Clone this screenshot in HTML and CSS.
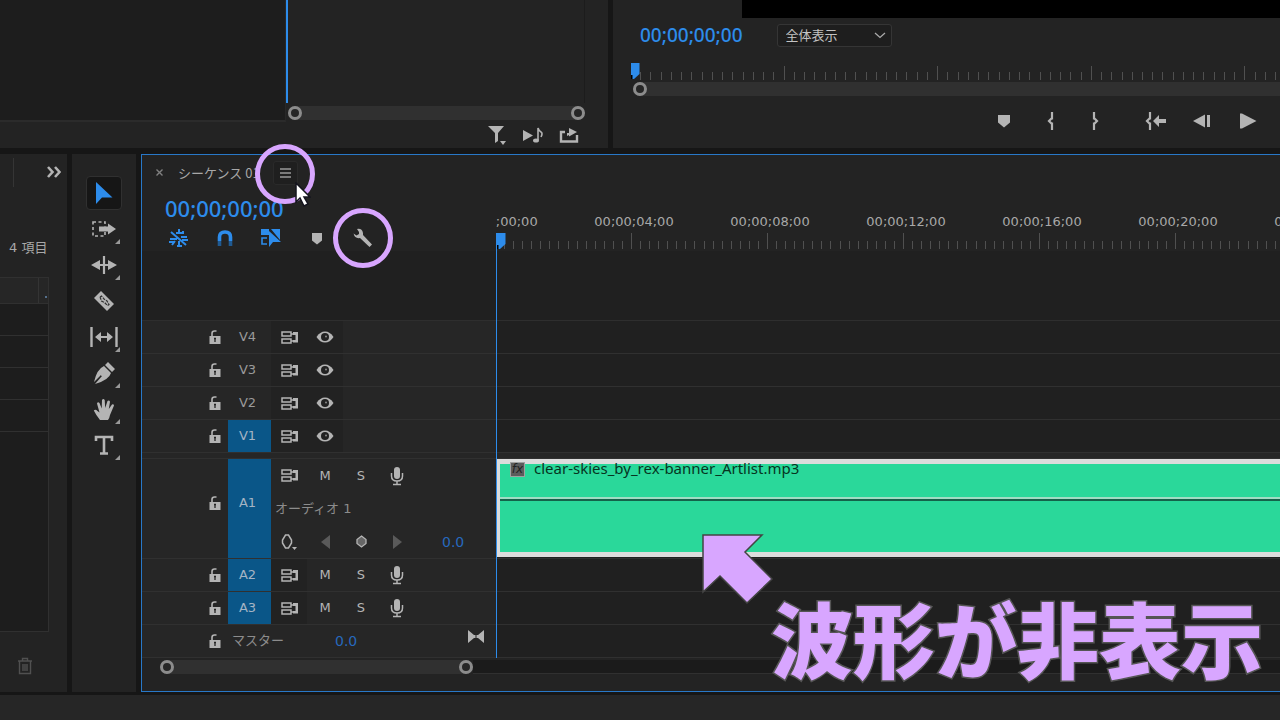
FILE: index.html
```html
<!DOCTYPE html>
<html lang="ja">
<head>
<meta charset="utf-8">
<title>シーケンス 01</title>
<link rel="stylesheet" href="styles.css">
</head>
<body>
<svg class="defs" aria-hidden="true">
  <symbol id="lock" viewBox="0 0 12 14"><path d="M3 6V3.500Q3 1 5.500 1H7.500" fill="none" stroke="currentColor" stroke-width="1.600"/><path d="M.5 6h11v8H.5z" fill="currentColor"/><path d="M6 8v4M5 8.500h2" stroke="#252525" stroke-width="1.300"/></symbol>
  <symbol id="sync" viewBox="0 0 17 13"><path d="M1 1h9v4H1zM1 8h9v4H1z" fill="none" stroke="currentColor" stroke-width="1.500"/><path d="M10 3h2M10 10h2" stroke="currentColor" stroke-width="1.500"/><path d="M12 1h5v10.500h-5V9h2.500V4H12z" fill="currentColor"/></symbol>
  <symbol id="eye" viewBox="0 0 18 12"><path d="M.5 6Q4 .5 9 .5T17.500 6Q14 11.500 9 11.500T.5 6z" fill="currentColor"/><circle cx="9" cy="6" r="4" fill="#222"/><circle cx="10" cy="5.500" r="1" fill="#888"/></symbol>
  <symbol id="mic" viewBox="0 0 14 20"><rect x="4" y="1" width="6" height="12" rx="3" fill="currentColor"/><path d="M1.500 7v3q0 5 5.500 5t5.500-5V7M7 15v3M3 18.500h8" fill="none" stroke="currentColor" stroke-width="1.500"/></symbol>
  <symbol id="marker" viewBox="0 0 14 14"><path d="M1 1h12v7.500l-6 5-6-5z" fill="currentColor"/></symbol>
  <symbol id="head" viewBox="0 0 9 16"><path d="M0 0h8.500v11L3 16H0z" fill="#2d8ceb"/><path d="M0 12h1.500v4H0z" fill="#000"/></symbol>
  <symbol id="cursor" viewBox="0 0 18 24"><path d="M1 1v22l6-6.500h10.500z" fill="#2d8ceb"/></symbol>
</svg>

<main class="app">
  <div class="upper">
    <section class="panel source">
      <div class="source-view">
        <div class="controls-list"></div>
        <div class="keyframes">
          <div class="keyframe-area"></div>
          <div class="zoombar"><i class="knob"></i><i class="knob"></i></div>
        </div>
      </div>
      <div class="source-tools">
        <button aria-label="フィルター"><svg width="20" height="20" viewBox="0 0 20 20"><path d="M1 1h16l-6 7v8l-3 2V8zM13 16h6l-3 4z" fill="currentColor"/></svg></button>
        <button aria-label="オーディオ再生"><svg width="22" height="18" viewBox="0 0 22 18"><path d="M1 4l10 5.500L1 15z" fill="currentColor"/><ellipse cx="14" cy="14.500" rx="3" ry="2" fill="currentColor"/><path d="M16 14V2q1 3 3 4t0 5" fill="none" stroke="currentColor" stroke-width="1.600"/></svg></button>
        <button aria-label="書き出し"><svg width="20" height="16" viewBox="0 0 20 16"><path d="M6 5H2v9.500h16V8" fill="none" stroke="currentColor" stroke-width="2.400"/><path d="M8 9V6h2V1l8 4-8 4.500V8z" fill="currentColor"/></svg></button>
      </div>
    </section>

    <section class="panel program">
      <div class="picture"></div>
      <div class="program-bar">
        <span class="timecode small">00;00;00;00</span>
        <label class="fit"><select aria-label="ズームレベル"><option>全体表示</option></select><svg width="12" height="7" viewBox="0 0 12 7"><path d="M1 1l5 4.500L11 1" fill="none" stroke="#aaa" stroke-width="1.300"/></svg></label>
      </div>
      <div class="program-ruler">
        <svg class="ticks" data-first="0" data-major="153.600" data-count="15" data-height="14" width="100%" height="14"></svg>
        <svg class="ruler-head" width="9" height="16"><use href="#head"/></svg>
      </div>
      <div class="zoombar wide"><i class="knob"></i></div>
      <div class="transport">
        <button aria-label="マーカーを追加"><svg width="14" height="14"><use href="#marker"/></svg></button>
        <button aria-label="インをマーク"><svg width="10" height="18" viewBox="0 0 10 18"><path d="M7 0v7.500M7 10.500V18M7 6L4 9l3 3" fill="none" stroke="currentColor" stroke-width="2.200"/></svg></button>
        <button aria-label="アウトをマーク"><svg width="10" height="18" viewBox="0 0 10 18"><path d="M3 0v7.500M3 10.500V18M3 6l3 3-3 3" fill="none" stroke="currentColor" stroke-width="2.200"/></svg></button>
        <button class="apart" aria-label="インへ移動"><svg width="22" height="18" viewBox="0 0 22 18"><path d="M5 0v7.500M5 10.500V18M5 6L2 9l3 3" fill="none" stroke="currentColor" stroke-width="2.200"/><path d="M8 9l6-6v4h7v4h-7v4z" fill="currentColor"/></svg></button>
        <button aria-label="前のフレーム"><svg width="18" height="14" viewBox="0 0 18 14"><path d="M0 7L12 .5v13zM14 1h3v12h-3z" fill="currentColor"/></svg></button>
        <button aria-label="再生"><svg width="18" height="16" viewBox="0 0 18 16"><path d="M1 .5h2L17.500 8 3 15.500H1z" fill="currentColor"/></svg></button>
      </div>
    </section>
  </div>

  <div class="lower">
    <aside class="panel project">
      <div class="project-tabs"><i></i><button aria-label="その他のパネル"><svg width="14" height="12" viewBox="0 0 14 12"><path d="M1 1l4.500 5L1 11M8 1l4.500 5L8 11" fill="none" stroke="currentColor" stroke-width="2.600"/></svg></button></div>
      <p class="count">4 項目</p>
      <div class="bin">
        <div class="bin-head"><i></i><b></b></div>
        <div class="bin-row"></div><div class="bin-row"></div><div class="bin-row"></div><div class="bin-row"></div>
      </div>
      <div class="project-foot"><button class="trash" aria-label="削除"><svg width="16" height="18" viewBox="0 0 16 18"><path d="M1 4h14M5.500 4V1.500h5V4M2.500 4v12.500h11V4M6 7v7M8 7v7M10 7v7" fill="none" stroke="currentColor" stroke-width="1.400"/></svg></button></div>
    </aside>

    <nav class="panel tools">
      <button class="tool on" aria-label="選択ツール"><svg width="18" height="24"><use href="#cursor"/></svg></button>
      <button class="tool more" aria-label="トラックの前方選択"><svg width="26" height="18" viewBox="0 0 26 18"><path d="M2 2h12v14H2z" fill="none" stroke="currentColor" stroke-width="1.600" stroke-dasharray="3 2.500"/><path d="M8 6.500h9V3.500l8 5.500-8 5.500v-3H8z" fill="currentColor"/></svg></button>
      <button class="tool more" aria-label="リップルツール"><svg width="26" height="20" viewBox="0 0 26 20"><path d="M0 10l9-5v10zM26 10l-9-5v10z" fill="currentColor"/><path d="M13 1v18M8 10h10" stroke="currentColor" stroke-width="2.200"/></svg></button>
      <button class="tool" aria-label="レーザーツール"><svg width="24" height="24" viewBox="0 0 24 24"><path d="M9 2l13 13-7 7L2 9z" fill="currentColor"/><path d="M8 8l1.500-1 2.500 3 3 2 2 3.500-1.500 1-3-3-3-1.500z" fill="none" stroke="#333" stroke-width="1.200" stroke-dasharray="3 1"/></svg></button>
      <button class="tool more" aria-label="スリップツール"><svg width="28" height="20" viewBox="0 0 28 20"><path d="M1.500 0v20M26.500 0v20" stroke="currentColor" stroke-width="2.400"/><path d="M5 10l6-5v4h6V5l6 5-6 5v-4h-6v4z" fill="currentColor"/></svg></button>
      <button class="tool more" aria-label="ペンツール"><svg width="24" height="24" viewBox="0 0 24 24"><path d="M16 1l7 7-3 3-7-7zM12 5l7 7q-2 7-16 11l7-8-1-1-7 7Q5 8 12 5z" fill="currentColor"/><circle cx="10.500" cy="13.500" r="1.600" fill="currentColor"/></svg></button>
      <button class="tool more" aria-label="手のひらツール"><svg width="22" height="23" viewBox="0 0 22 23"><path d="M7 22Q3 17 .8 12.500q1.600-1.800 3.700.5l2 1.500L4 5.500q.8-2 2.500-.5l2.200 5.500L9 2q1.300-2 2.700 0l.5 8L14.500 3q1.700-1.300 2.500.7L15.800 11l3.200-4.500q1.700-.8 2 1L17 17q-.5 3-2 5z" fill="currentColor"/></svg></button>
      <button class="tool more" aria-label="横書き文字ツール"><svg width="20" height="20" viewBox="0 0 20 20"><path d="M2 6V2h16v4M10 2v16M6 18.500h8" fill="none" stroke="currentColor" stroke-width="2.600"/></svg></button>
    </nav>

    <section class="panel timeline">
      <div class="timeline-top">
        <div class="timeline-head">
          <div class="tab"><button class="close" aria-label="閉じる"><svg width="7" height="7" viewBox="0 0 7 7"><path d="M.5.5l6 6M6.500.5l-6 6" stroke="currentColor" stroke-width="1.400"/></svg></button><span>シーケンス 01</span><button class="menu" aria-label="パネルメニュー"><svg width="11" height="10" viewBox="0 0 11 10"><path d="M0 1h11M0 5h11M0 9h11" stroke="currentColor" stroke-width="1.500"/></svg></button></div>
          <div class="clock"><span class="timecode">00;00;00;00</span></div>
          <div class="options">
            <button class="lit" aria-label="ネスト"><svg width="20" height="18" viewBox="0 0 20 18"><path d="M10 0v5M7 4h7V2M1 10h7M0 13h6M2 3l15 13M12 8h6M13 11h6M8 17h5M10 12v6M6 12l-3 4" fill="none" stroke="currentColor" stroke-width="2"/></svg></button>
            <button class="lit" aria-label="スナップ"><svg width="16" height="16" viewBox="0 0 16 16"><path d="M2.500 11V7q0-5 5.500-5t5.500 5v4" fill="none" stroke="currentColor" stroke-width="3.600"/><path d="M2.500 11v5M13.500 11v5" stroke="#205a92" stroke-width="3.600"/></svg></button>
            <button class="lit" aria-label="リンクされた選択"><svg width="20" height="18" viewBox="0 0 20 18"><path d="M0 0h8v6H0zM10 0h9v11z" fill="currentColor"/><path d="M6 9H1v6h5" fill="none" stroke="currentColor" stroke-width="1.600"/><path d="M8 2v16l4-5h8z" fill="currentColor"/></svg></button>
            <button aria-label="マーカー"><svg width="12" height="13" viewBox="0 0 12 13"><path d="M1 1h10v7.500L6 12.500 1 8.500z" fill="currentColor"/></svg></button>
            <button aria-label="タイムライン表示設定"><svg width="20" height="20" viewBox="0 0 20 20"><path d="M4 1q5-1 6 4v2l9 9.500-2.500 2.500L7 10Q2 11 .5 5.500l3 2L6 6V4z" fill="currentColor"/></svg></button>
          </div>
        </div>
        <div class="ruler">
          <div class="labels"><span>00;00;00;00</span><span>00;00;04;00</span><span>00;00;08;00</span><span>00;00;12;00</span><span>00;00;16;00</span><span>00;00;20;00</span><span>00;00;24;00</span></div>
          <svg class="ticks" data-first="-1" data-major="136" data-count="15" data-height="16" width="100%" height="16"></svg>
        </div>
      </div>

      <div class="track">
        <div class="head"><button class="lock" aria-label="ロック"><svg width="12" height="14"><use href="#lock"/></svg></button><button class="name">V4</button><div class="cells shade"><button aria-label="同期"><svg width="17" height="13"><use href="#sync"/></svg></button><button aria-label="表示"><svg width="18" height="12"><use href="#eye"/></svg></button></div></div>
        <div class="lane"></div>
      </div>
      <div class="track">
        <div class="head"><button class="lock" aria-label="ロック"><svg width="12" height="14"><use href="#lock"/></svg></button><button class="name">V3</button><div class="cells shade"><button aria-label="同期"><svg width="17" height="13"><use href="#sync"/></svg></button><button aria-label="表示"><svg width="18" height="12"><use href="#eye"/></svg></button></div></div>
        <div class="lane"></div>
      </div>
      <div class="track">
        <div class="head"><button class="lock" aria-label="ロック"><svg width="12" height="14"><use href="#lock"/></svg></button><button class="name">V2</button><div class="cells shade"><button aria-label="同期"><svg width="17" height="13"><use href="#sync"/></svg></button><button aria-label="表示"><svg width="18" height="12"><use href="#eye"/></svg></button></div></div>
        <div class="lane"></div>
      </div>
      <div class="track">
        <div class="head"><button class="lock" aria-label="ロック"><svg width="12" height="14"><use href="#lock"/></svg></button><button class="name target">V1</button><div class="cells shade"><button aria-label="同期"><svg width="17" height="13"><use href="#sync"/></svg></button><button aria-label="表示"><svg width="18" height="12"><use href="#eye"/></svg></button></div></div>
        <div class="lane"></div>
      </div>
      <div class="divider"></div>
      <div class="track tall">
        <div class="head"><button class="lock" aria-label="ロック"><svg width="12" height="14"><use href="#lock"/></svg></button><button class="name target">A1</button>
          <div class="stack">
            <div class="cells"><button aria-label="同期"><svg width="17" height="13"><use href="#sync"/></svg></button><button>M</button><button>S</button><button aria-label="録音"><svg width="14" height="20"><use href="#mic"/></svg></button></div>
            <div class="title">オーディオ 1</div>
            <div class="cells">
              <button aria-label="キーフレーム表示"><svg width="16" height="16" viewBox="0 0 16 16"><path d="M4.500 1h3L10.500 6v3l-3 5h-3l-3-5V6z" fill="none" stroke="currentColor" stroke-width="1.500"/><path d="M11 13h5l-2.500 3z" fill="currentColor"/></svg></button>
              <button class="dim" aria-label="前のキーフレーム"><svg width="9" height="14" viewBox="0 0 9 14"><path d="M9 0v14L0 7z" fill="currentColor"/></svg></button>
              <button aria-label="キーフレームを追加"><svg width="11" height="13" viewBox="0 0 11 13"><path d="M5.500 1L10 4.500v4l-4.500 3.500L1 8.500v-4z" fill="#666" stroke="currentColor" stroke-width="1.300"/></svg></button>
              <button class="dim" aria-label="次のキーフレーム"><svg width="9" height="14" viewBox="0 0 9 14"><path d="M0 0v14l9-7z" fill="currentColor"/></svg></button>
              <span class="level end">0.0</span>
            </div>
          </div>
        </div>
        <div class="lane">
          <div class="clip"><span class="fx">fx</span><span>clear-skies_by_rex-banner_Artlist.mp3</span></div>
        </div>
      </div>
      <div class="track">
        <div class="head"><button class="lock" aria-label="ロック"><svg width="12" height="14"><use href="#lock"/></svg></button><button class="name target">A2</button><div class="cells"><button class="shade" aria-label="同期"><svg width="17" height="13"><use href="#sync"/></svg></button><button>M</button><button>S</button><button aria-label="録音"><svg width="14" height="20"><use href="#mic"/></svg></button></div></div>
        <div class="lane"></div>
      </div>
      <div class="track">
        <div class="head"><button class="lock" aria-label="ロック"><svg width="12" height="14"><use href="#lock"/></svg></button><button class="name target">A3</button><div class="cells"><button class="shade" aria-label="同期"><svg width="17" height="13"><use href="#sync"/></svg></button><button>M</button><button>S</button><button aria-label="録音"><svg width="14" height="20"><use href="#mic"/></svg></button></div></div>
        <div class="lane"></div>
      </div>
      <div class="track">
        <div class="head"><button class="lock" aria-label="ロック"><svg width="12" height="14"><use href="#lock"/></svg></button><span class="master">マスター</span><span class="level">0.0</span><button class="fold" aria-label="折りたたみ"><svg width="16" height="13" viewBox="0 0 16 13"><path d="M0 0l6 5h4l6-5v13l-6-5H6l-6 5z" fill="currentColor"/><path d="M8 4v5" stroke="#252525"/></svg></button></div>
        <div class="lane"></div>
      </div>
      <div class="scroll"><div class="zoombar"><i class="knob"></i><i class="knob"></i></div><div class="groove"></div></div>
      <div class="playhead"><svg width="9" height="16"><use href="#head"/></svg></div>
    </section>
  </div>
  <footer class="status"></footer>

  <div class="ring first"></div>
  <div class="ring second"></div>
  <svg class="mouse" width="16" height="27" viewBox="0 0 16 27"><path d="M1 1v19l4-4 4 8 4-2-4-7h6z" fill="#fff" stroke="#14141e" stroke-width="1.500"/></svg>
  <svg class="arrow" width="74" height="74" viewBox="0 0 74 74"><path d="M1 1h59L43 18l27 27-25 24-27-27L1 58z" fill="#d8a6ff" stroke="#444" stroke-width="1.500"/></svg>
  <p class="caption">波形が非表示</p>
</main>
<script src="ticks.js"></script>
</body>
</html>
```

FILE: ticks.js
```js
// Fills each ruler with evenly spaced marks; every nth one is tall.
document.querySelectorAll('.ticks').forEach(function (svg) {
  var first = Number(svg.dataset.first);
  var major = Number(svg.dataset.major);
  var count = Number(svg.dataset.count);
  var height = Number(svg.dataset.height);
  var width = svg.getBoundingClientRect().width;
  var d = '';
  for (var i = 1; first + i * major / count < width; i++) {
    var x = Math.round(first + i * major / count) + 0.5;
    d += 'M' + x + ' ' + (i % count ? height - 8 : 0) + 'V' + height;
  }
  var path = document.createElementNS('http://www.w3.org/2000/svg', 'path');
  path.setAttribute('d', d);
  svg.appendChild(path);
});
```

FILE: styles.css
```css
* { box-sizing: border-box; }
body {
  margin: 0;
  background: #161616;
  color: #a8a8a8;
  font: 13px/16px "DejaVu Sans", "Noto Sans CJK JP", sans-serif;
}
button {
  display: flex;
  align-items: center;
  justify-content: center;
  margin: 0;
  padding: 0;
  border: 0;
  background: none;
  color: #b4b4b4;
  font: inherit;
}
p { margin: 0; }
svg { display: block; flex: none; }
.defs { position: absolute; width: 0; height: 0; }
.app { position: relative; display: flex; flex-direction: column; min-height: 100vh; overflow: hidden; }
.panel { background: #232323; }
.timecode { color: #2d8ceb; font: 500 22px/28px "Noto Sans", sans-serif; }
.timecode.small { font-size: 19px; }

.upper { display: flex; gap: 5px; height: 148px; }
.source { flex: 608; display: flex; flex-direction: column; }
.source-view { display: flex; height: 122px; }
.controls-list { width: 47%; background: #1d1d1d; border-bottom: 2px solid #2b2b2b; border-right: 1px solid #282828; }
.keyframes { flex: 1; display: flex; flex-direction: column; gap: 3px; padding-right: 23px; }
.keyframe-area { height: 103px; border-left: 2px solid #2d8ceb; border-right: 1px solid #1c1c1c; }
.zoombar { display: flex; align-items: center; justify-content: space-between; height: 14px; background: #303030; border-radius: 7px; }
.keyframes .zoombar { margin: 0 0 0 2px; }
.knob { flex: none; width: 14px; height: 14px; border: 3px solid #8c8c8c; border-radius: 50%; background: #262626; }
.source-tools { display: flex; justify-content: flex-end; gap: 15px; padding: 3px 29px 0 0; }

.program { flex: 667; min-width: 0; display: flex; flex-direction: column; }
.picture { height: 18px; margin-left: 129px; background: #000; }
.program-bar { display: flex; align-items: center; gap: 34px; height: 34px; padding-left: 27px; }
.fit { position: relative; }
.fit select {
  appearance: none;
  display: block;
  width: 115px;
  height: 23px;
  padding: 0 8px;
  border: 1px solid #353535;
  border-radius: 3px;
  background: #1e1e1e;
  color: #c4c4c4;
  font: 13px/20px "Noto Sans CJK JP", sans-serif;
}
.fit svg { position: absolute; right: 6px; top: 8px; }
.program-ruler { position: relative; height: 30px; padding: 14px 0 0 17px; }
.ruler-head { position: absolute; left: 18px; top: 11px; }
.ticks { stroke: #505050; fill: none; }
.wide { margin-left: 20px; border-radius: 7px 0 0 7px; }
.transport { display: flex; justify-content: flex-end; gap: 24px; padding: 16px 21px 0 0; }
.transport button { width: 22px; height: 18px; }
.transport .apart { margin-left: 14px; }

.lower { flex: 1; display: flex; gap: 5px; padding-top: 6px; }
.project { width: 67px; display: flex; flex-direction: column; }
.project-tabs { display: flex; justify-content: space-between; padding: 4px 6px 0 13px; height: 86px; }
.project-tabs i { width: 1px; height: 29px; background: #353535; }
.project-tabs button { height: 27px; }
.count { height: 37px; padding-left: 9px; }
.bin { flex: 1; width: 49px; border: solid #303030; border-width: 1px 1px 1px 0; background: #1d1d1d; }
.bin-head { display: flex; align-items: flex-end; justify-content: flex-end; height: 26px; background: #262626; border-bottom: 1px solid #303030; }
.bin-head i { width: 1px; height: 25px; background: #343434; }
.bin-head b { width: 2px; height: 2px; margin: 0 1px 5px 6px; background: #55708c; }
.bin-row { height: 32px; border-bottom: 1px solid #303030; }
.project-foot { height: 60px; padding: 25px 0 0 17px; }
.trash { color: #505050; }

.tools { width: 64px; padding-top: 22px; }
.tool { position: relative; width: 36px; height: 34px; margin: 0 auto 2px; }
.tool.on { border: 1px solid #303030; border-radius: 4px; background: #161616; }
.more::after { content: ""; position: absolute; right: 2px; bottom: 2px; border: solid transparent; border-width: 0 0 5px 5px; border-bottom-color: #999; }

.timeline { position: relative; flex: 1; min-width: 0; border: solid #2878c8; border-width: 1px 0 1px 1px; }
.timeline-top { display: flex; height: 166px; border-bottom: 1px solid #2e2e2e; background: linear-gradient(#232323 96px, #202020 96px); }
.timeline-head { width: 354px; }
.tab { display: flex; align-items: center; height: 35px; padding-left: 14px; font: 13px/18px "Noto Sans CJK JP", sans-serif; }
.close { color: #808080; }
.tab span { width: 95px; margin-left: 15px; white-space: nowrap; }
.menu { width: 25px; height: 24px; border: 1px solid #2a2a2a; border-radius: 3px; background: #1f1f1f; color: #999; }
.clock { display: flex; align-items: center; height: 36px; padding-left: 23px; }
.options { display: flex; height: 24px; padding-left: 14px; }
.options button { width: 46px; }
.options .lit { color: #2d8ceb; }
.ruler { flex: 1; min-width: 0; padding-top: 59px; overflow: hidden; }
.labels { display: flex; height: 19px; margin-left: -66px; }
.labels span { flex: none; width: 136px; text-align: center; }

.track { display: flex; height: 33px; border-bottom: 1px solid #303030; }
.track.tall { height: 100px; }
.head { display: flex; width: 354px; background: #262626; }
.lane { flex: 1; min-width: 0; background: #202020; }
.divider { height: 6px; background: #262626; border-bottom: 1px solid #303030; }
.lock { width: 86px; padding-right: 7px; justify-content: flex-end; }
.name { width: 43px; padding-right: 4px; color: #9a9a9a; }
.target { background: #0a5688; color: #a4b4c4; }
.tall .lock, .tall .name { padding-bottom: 12px; }
.cells { display: flex; }
.cells button { width: 36px; }
.shade { background: #222; }
.stack { flex: 1; }
.stack .cells, .title { height: 33px; }
.title { padding: 0 4px; line-height: 33px; color: #8c8c8c; }
.cells .dim { color: #5a5a5a; }
.level { align-self: center; color: #2769bd; font-size: 14px; }
.end { margin-left: 27px; }
.master { align-self: center; width: 107px; padding-left: 4px; color: #8c8c8c; }
.fold { align-self: flex-start; margin: 5px 12px 0 auto; }
.clip {
  display: flex;
  gap: 9px;
  height: 98px;
  padding: 0 0 0 14px;
  background: linear-gradient(#2ad89a 38px, #a0dcc4 38px, #a0dcc4 40px, #14634a 40px, #14634a 42px, #2ad89a 42px);
  box-shadow: inset 4px 5px #dcdcdc, inset 0 -5px #dcdcdc;
  color: #06351f;
  font: 15px/18px "Noto Sans", sans-serif;
}
.clip span { white-space: nowrap; }
.clip .fx { width: 15px; height: 15px; margin-top: 3px; border: 1px solid #a0a0a0; background: #5c5c5c; color: #222; font: italic 12px/12px "DejaVu Sans", sans-serif; text-align: center; }
.scroll { display: flex; padding: 2px 0 17px 18px; }
.scroll .zoombar { width: 313px; }
.groove { flex: 1; border-bottom: 1px solid #303030; background: #1b1b1b; }
.playhead { position: absolute; left: 354px; top: 78px; bottom: 33px; border-left: 1px solid #2d8ceb; }

.status { height: 25px; margin-top: 3px; background: #262626; }

.ring { position: absolute; width: 60px; height: 60px; border: 5px solid #d8a6ff; border-radius: 50%; }
.ring.first { left: 255px; top: 144px; }
.ring.second { left: 333px; top: 208px; }
.mouse { position: absolute; left: 295px; top: 182px; }
.arrow { position: absolute; left: 702px; top: 534px; }
.caption {
  position: absolute;
  left: 771px;
  top: 577px;
  color: #d8a6ff;
  font: 900 82px/120px "Noto Sans CJK JP", sans-serif;
  white-space: nowrap;
  -webkit-text-stroke: 3px #555;
  paint-order: stroke fill;
}
```
